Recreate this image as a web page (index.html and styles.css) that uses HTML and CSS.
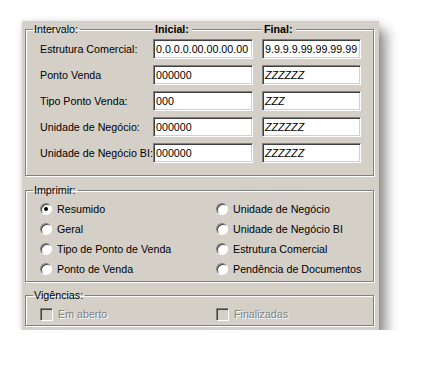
FILE: index.html
```html
<!DOCTYPE html>
<html lang="pt">
  <head>
    <meta charset="UTF-8" />
    <title>Filtro</title>
    <link rel="stylesheet" href="styles.css">
  </head>
  <body>
    <div class="panel">
      <fieldset class="group range">
        <legend>Intervalo:</legend>
        <span class="col-head col-ini">Inicial:</span>
        <span class="col-head col-fin">Final:</span>
        <div class="rows">
          <div class="row">
            <span class="label">Estrutura Comercial:</span>
            <div class="field">0.0.0.0.00.00.00.00</div>
            <div class="field">9.9.9.9.99.99.99.99</div>
          </div>
          <div class="row">
            <span class="label">Ponto Venda</span>
            <div class="field">000000</div>
            <div class="field zz">ZZZZZZ</div>
          </div>
          <div class="row">
            <span class="label">Tipo Ponto Venda:</span>
            <div class="field">000</div>
            <div class="field zz">ZZZ</div>
          </div>
          <div class="row">
            <span class="label">Unidade de Negócio:</span>
            <div class="field">000000</div>
            <div class="field zz">ZZZZZZ</div>
          </div>
          <div class="row">
            <span class="label">Unidade de Negócio BI:</span>
            <div class="field">000000</div>
            <div class="field zz">ZZZZZZ</div>
          </div>
        </div>
      </fieldset>

      <fieldset class="group print">
        <legend>Imprimir:</legend>
        <div class="options">
          <div class="option"><span class="radio checked"></span>Resumido</div>
          <div class="option"><span class="radio"></span>Unidade de Negócio</div>
          <div class="option"><span class="radio"></span>Geral</div>
          <div class="option"><span class="radio"></span>Unidade de Negócio BI</div>
          <div class="option"><span class="radio"></span>Tipo de Ponto de Venda</div>
          <div class="option"><span class="radio"></span>Estrutura Comercial</div>
          <div class="option"><span class="radio"></span>Ponto de Venda</div>
          <div class="option"><span class="radio"></span>Pendência de Documentos</div>
        </div>
      </fieldset>

      <fieldset class="group terms">
        <legend>Vigências:</legend>
        <div class="options">
          <div class="option disabled"><span class="check"></span>Em aberto</div>
          <div class="option disabled"><span class="check"></span>Finalizadas</div>
        </div>
      </fieldset>
    </div>
  </body>
</html>
```

FILE: styles.css
```css
body {
  margin: 0;
  padding: 21px 0 0 22px;
  background-color: #ffffff;
  font-family: "Liberation Sans", Arial, sans-serif;
  font-size: 10.7px;
  color: #000000;
}

.panel {
  width: 349px;
  padding: 2px 5px 4px 3px;
  background-color: #d4d0c8;
  box-shadow: 7px 9px 12px rgba(0, 0, 0, 0.45), 0 0 5px rgba(0, 0, 0, 0.12);
}

.group {
  margin: 0;
  padding: 0;
  border: 1px solid #808080;
  box-shadow: inset 1px 1px #ffffff, 1px 1px #ffffff;
  position: relative;
}

.group legend {
  margin-left: 7px;
  padding: 0 2px 0 1px;
  line-height: 13px;
}

.col-head {
  position: absolute;
  top: -13px;
  line-height: 13px;
  padding: 0 3px 0 2px;
  background-color: #d4d0c8;
  font-weight: bold;
}

.col-ini {
  left: 127px;
}

.col-fin {
  left: 236px;
}

.rows {
  display: flex;
  flex-direction: column;
  gap: 6px;
  padding: 3px 0 12px 14px;
}

.row {
  display: grid;
  grid-template-columns: 104px 100px 99px;
  column-gap: 9px;
  align-items: center;
  height: 20px;
}

.label {
  white-space: nowrap;
}

.field {
  height: 18px;
  line-height: 18px;
  padding: 0 2px;
  background-color: #ffffff;
  border: 1px solid;
  border-color: #808080 #ffffff #ffffff #808080;
  box-shadow: inset 1px 1px #404040, inset -1px -1px #d4d0c8;
  white-space: nowrap;
  overflow: hidden;
}

.zz {
  font-style: italic;
}

.print {
  margin-top: 8px;
}

.terms {
  margin-top: 7px;
}

.options {
  display: grid;
  grid-template-columns: 176px 1fr;
  grid-auto-rows: 20px;
  padding: 2px 0 2px 14px;
}

.option {
  display: flex;
  align-items: center;
  gap: 5px;
}

.radio {
  width: 10px;
  height: 10px;
  border-radius: 50%;
  background-color: #ffffff;
  border: 1px solid;
  border-color: #808080 #ffffff #ffffff #808080;
  box-shadow: inset 1px 1px #404040;
  display: flex;
  align-items: center;
  justify-content: center;
}

.radio.checked::after {
  content: "";
  width: 4px;
  height: 4px;
  border-radius: 50%;
  background-color: #000000;
}

.check {
  width: 11px;
  height: 11px;
  background-color: #d4d0c8;
  border: 1px solid;
  border-color: #808080 #ffffff #ffffff #808080;
  box-shadow: inset 1px 1px #404040;
}

.disabled {
  color: #808080;
  text-shadow: 1px 1px #ffffff;
}

.terms .options {
  padding: 2px 0 1px 14px;
}
```
